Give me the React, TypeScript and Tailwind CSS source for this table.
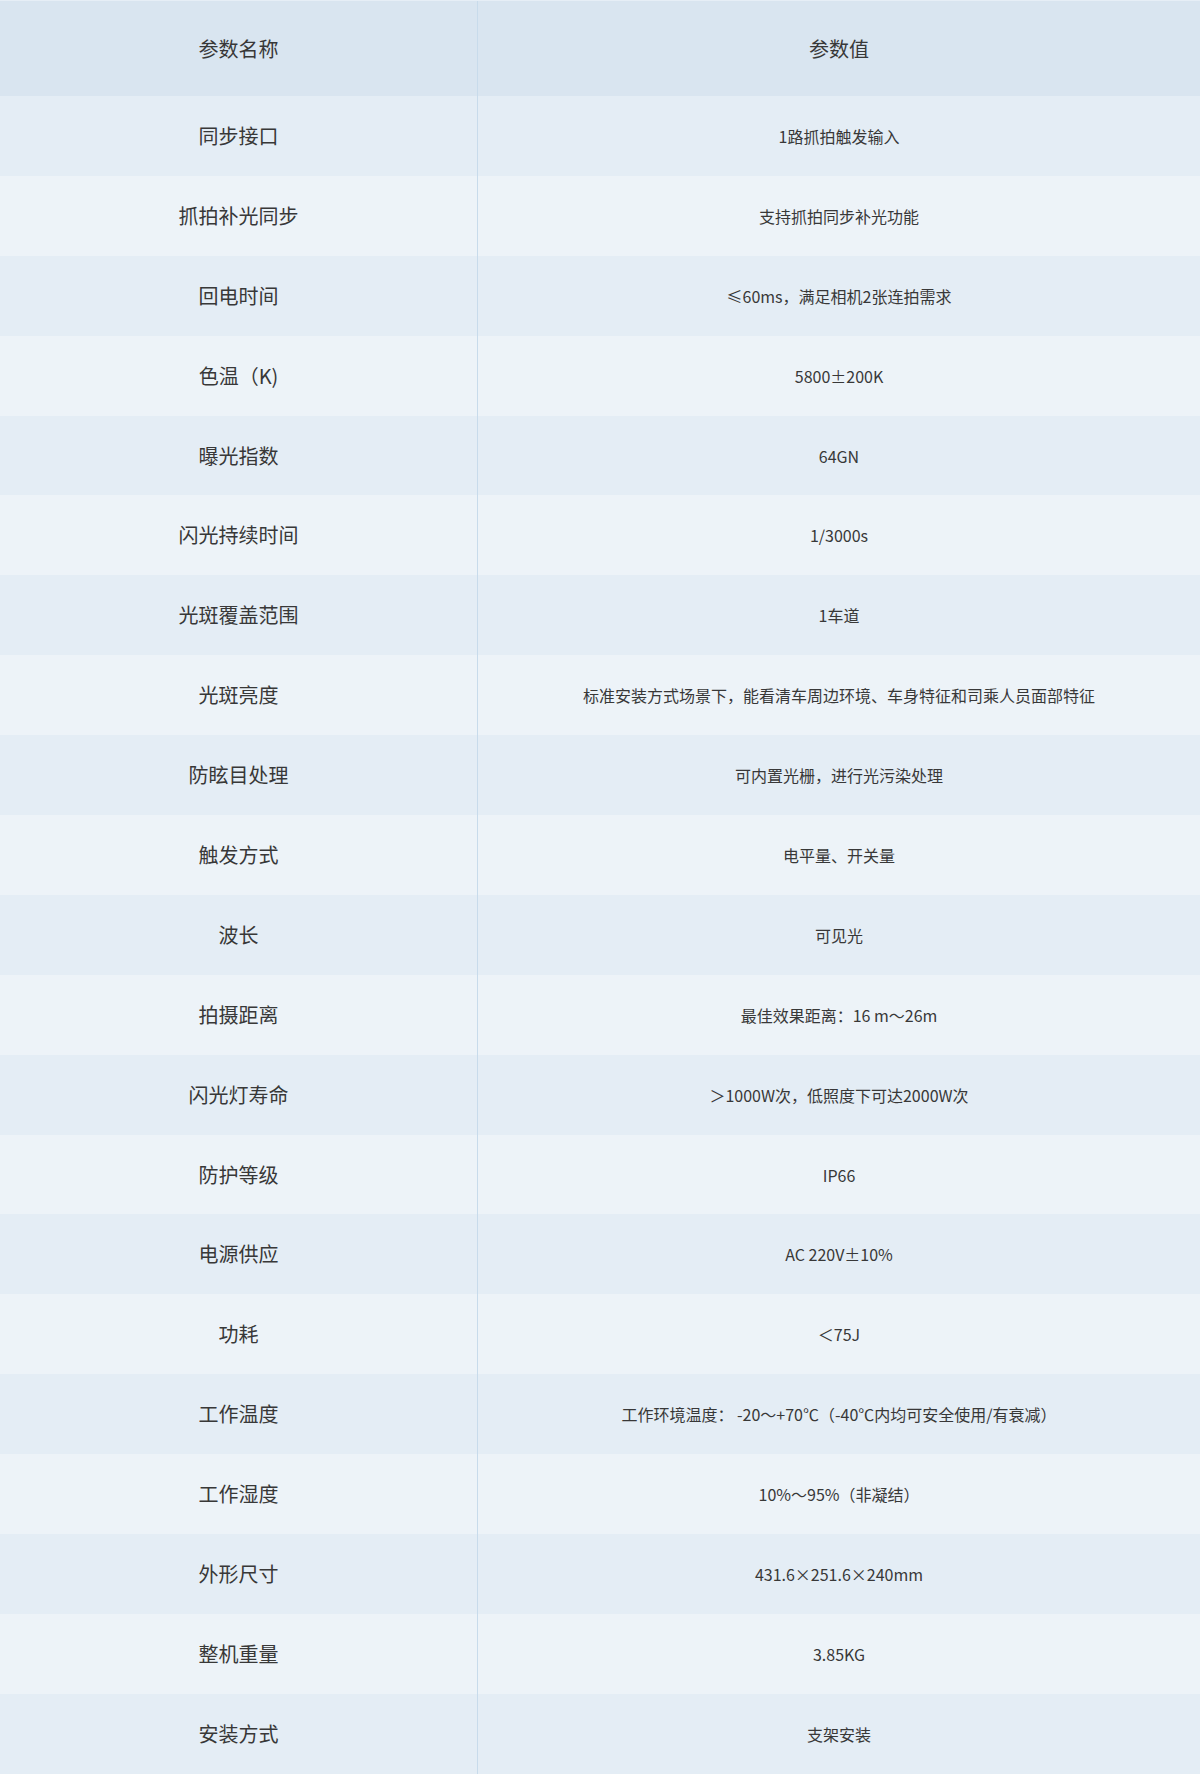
import React from "react";

const rows: [string, string][] = [
  ["同步接口", "1路抓拍触发输入"],
  ["抓拍补光同步", "支持抓拍同步补光功能"],
  ["回电时间", "≤60ms，满足相机2张连拍需求"],
  ["色温（K)", "5800±200K"],
  ["曝光指数", "64GN"],
  ["闪光持续时间", "1/3000s"],
  ["光斑覆盖范围", "1车道"],
  ["光斑亮度", "标准安装方式场景下，能看清车周边环境、车身特征和司乘人员面部特征"],
  ["防眩目处理", "可内置光栅，进行光污染处理"],
  ["触发方式", "电平量、开关量"],
  ["波长", "可见光"],
  ["拍摄距离", "最佳效果距离：16 m～26m"],
  ["闪光灯寿命", "＞1000W次，低照度下可达2000W次"],
  ["防护等级", "IP66"],
  ["电源供应", "AC 220V±10%"],
  ["功耗", "＜75J"],
  ["工作温度", "工作环境温度： -20～+70℃（-40℃内均可安全使用/有衰减）"],
  ["工作湿度", "10%～95%（非凝结）"],
  ["外形尺寸", "431.6×251.6×240mm"],
  ["整机重量", "3.85KG"],
  ["安装方式", "支架安装"],
];

export default function App() {
  return (
    <div
      className="w-[1200px] text-[#383838]"
      style={{ fontFamily: '"Noto Sans CJK SC", "Noto Sans", sans-serif' }}
    >
      <div className="flex h-[96px] bg-[#d9e5f0] border-t border-[#e6eef6]">
        <div className="w-[478px] flex items-center justify-center text-[20px] border-r border-[#c8dbeb]">
          参数名称
        </div>
        <div className="flex-1 flex items-center justify-center text-[20px]">
          参数值
        </div>
      </div>
      {rows.map(([name, value], i) => (
        <div
          key={name}
          className={
            "flex h-[79.9px] " + (i % 2 === 0 ? "bg-[#e4edf5]" : "bg-[#edf3f8]")
          }
        >
          <div className="w-[478px] flex items-center justify-center text-[20px] border-r border-[#c8dbeb]">
            {name}
          </div>
          <div className="flex-1 flex items-center justify-center text-[16px]">
            {value}
          </div>
        </div>
      ))}
    </div>
  );
}
